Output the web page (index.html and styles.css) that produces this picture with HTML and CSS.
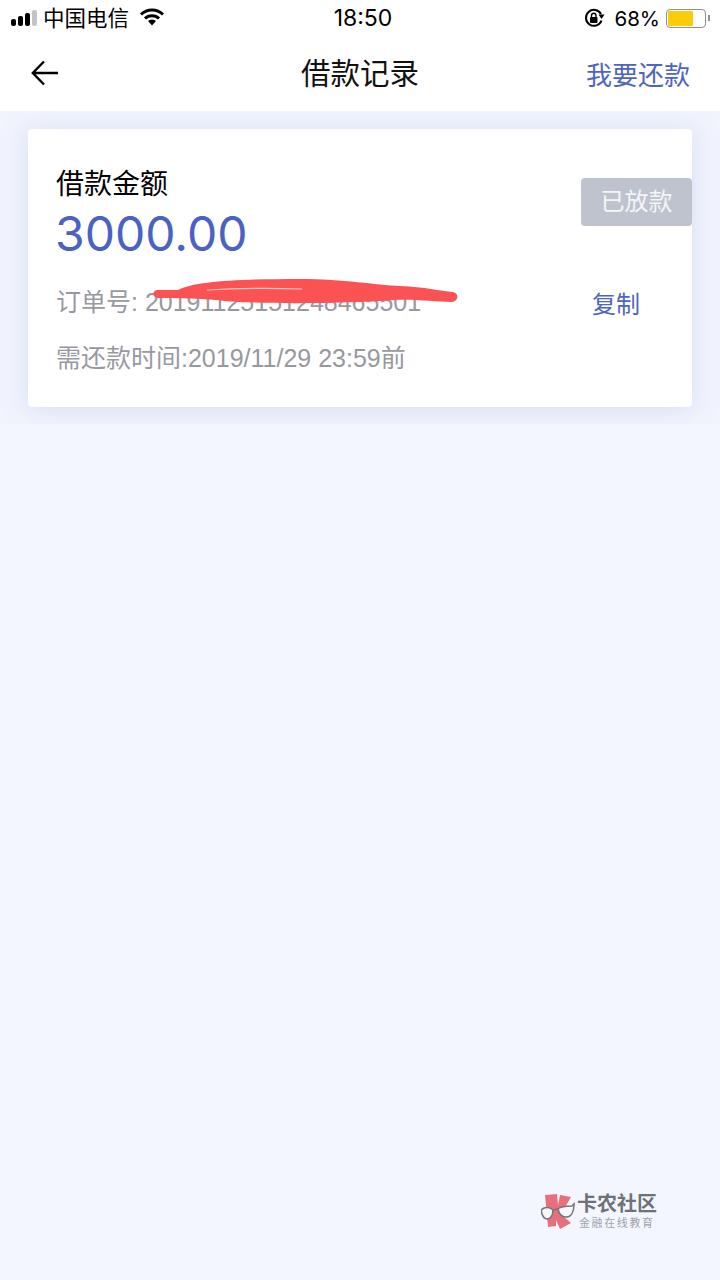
FILE: index.html
```html
<!DOCTYPE html>
<html lang="zh-CN">
<head>
    <meta charset="UTF-8">
    <meta name="viewport" content="width=device-width, initial-scale=1.0">
    <title>借款记录</title>
    <link rel="stylesheet" href="styles.css">
</head>
<body>
    <div class="status-bar">
        <div class="status-left">
            <div class="signal">
                <span class="bar b1"></span>
                <span class="bar b2"></span>
                <span class="bar b3"></span>
                <span class="bar b4"></span>
            </div>
            <span class="carrier">中国电信</span>
            <svg class="wifi" width="26" height="18" viewBox="0 0 26 18">
                <path d="M13 17.5 L9 13 A6 6 0 0 1 17 13 Z" fill="#000"/>
                <path d="M2 6.5 A16 16 0 0 1 24 6.5" fill="none" stroke="#000" stroke-width="3"/>
                <path d="M6 10.5 A10 10 0 0 1 20 10.5" fill="none" stroke="#000" stroke-width="3"/>
            </svg>
        </div>
        <span class="clock">18:50</span>
        <div class="status-right">
            <svg class="lock" width="22" height="20" viewBox="0 0 22 20">
                <path d="M17.5 12.5 A8 8 0 1 1 17 6" fill="none" stroke="#000" stroke-width="2"/>
                <path d="M14.5 6.5 L20.5 6.5 L17.5 11 Z" fill="#000"/>
                <rect x="6" y="9" width="7.5" height="6" rx="1" fill="#000"/>
                <path d="M7.5 9 V7.5 A2.2 2.2 0 0 1 12 7.5 V9" fill="none" stroke="#000" stroke-width="1.4"/>
            </svg>
            <span class="percent">68%</span>
            <div class="battery"><div class="battery-level"></div></div>
            <span class="battery-tip"></span>
        </div>
    </div>

    <div class="nav-bar">
        <svg class="back" width="28" height="26" viewBox="0 0 28 26">
            <path d="M13 1.5 L1.8 13 L13 24.5 M2 13 H27" fill="none" stroke="#000" stroke-width="2.4"/>
        </svg>
        <span class="nav-title">借款记录</span>
        <span class="nav-action">我要还款</span>
    </div>

    <div class="list">
        <div class="card">
            <div class="amount-label">借款金额</div>
            <div class="amount">3000.00</div>
            <div class="badge">已放款</div>
            <div class="order-row">
                <span class="meta">订单号: 20191125151248465501</span>
                <span class="copy">复制</span>
                <svg class="scribble" width="310" height="30" viewBox="0 0 310 30">
                    <path d="M7 14 L28 14 C45 5 90 3 150 3 C195 3 225 9 250 10 C275 11 290 15 303 16 C309 17 309 25 302 26 C285 26 265 23 245 24 C190 28 110 28 75 25 C60 23 40 22 8 22 C2 21 2 15 7 14 Z" fill="#fb5354"/>
                    <path d="M57 14 C90 12 120 12 152 13" fill="none" stroke="#fdc4c4" stroke-width="1.2"/>
                </svg>
            </div>
            <div class="meta due">需还款时间:2019/11/29 23:59前</div>
        </div>
    </div>

    <div class="watermark">
        <svg class="wm-logo" width="36" height="40" viewBox="0 0 36 40">
            <path d="M4 3 L16 2 L17 13 L19 3 L30 5 L23 17 L22 24 L30 31 L19 37 L15 28 L15 34 L7 35 L6 24 Z" fill="#e8707c"/>
            <path d="M0 18 L3 16 C6 15 10 16 12 18 C12 24 9 27 6 27 C3 27 1 24 0 18 Z" fill="#f6f7fc" stroke="#77767c" stroke-width="1.6"/>
            <path d="M17 17 C20 14 27 14 31 14 L33 12 C33 20 30 25 25 25 C21 25 18 22 17 17 Z" fill="#f6f7fc" stroke="#77767c" stroke-width="1.6"/>
            <path d="M12 18 L17 17" stroke="#77767c" stroke-width="1.6"/>
        </svg>
        <div class="wm-text">
            <div class="wm-name">卡农社区</div>
            <div class="wm-sub">金融在线教育</div>
        </div>
    </div>
</body>
</html>
```

FILE: styles.css
```css
* {
    box-sizing: border-box;
}
body {
    margin: 0;
    width: 720px;
    height: 1280px;
    overflow: hidden;
    position: relative;
    background: #f3f6fe;
    font-family: "Liberation Sans", "Noto Sans CJK SC", sans-serif;
}
.status-bar {
    height: 36px;
    padding: 0 10px 0 11px;
    background: #fff;
    display: flex;
    align-items: center;
    justify-content: space-between;
    color: #000;
}
.status-left, .status-right {
    display: flex;
    align-items: center;
}
.status-left {
    width: 275px;
}
.status-right {
    width: 270px;
    justify-content: flex-end;
}
.signal {
    display: flex;
    align-items: flex-end;
    gap: 2px;
    height: 16px;
}
.bar {
    width: 5px;
    border-radius: 2px;
    background: #000;
}
.b1 { height: 7px; }
.b2 { height: 10px; }
.b3 { height: 13px; }
.b4 { height: 16px; background: #c4c4c4; }
.carrier {
    font-size: 21.5px;
    margin-left: 6px;
    margin-bottom: 3px;
}
.wifi {
    margin-left: 10px;
    margin-bottom: 2px;
}
.clock {
    font-size: 23px;
    font-family: Inter, "Liberation Sans", sans-serif;
}
.percent {
    font-size: 20.5px;
    margin-left: 8px;
    font-family: Inter, "Liberation Sans", sans-serif;
}
.battery {
    width: 40px;
    height: 19px;
    margin-left: 6px;
    padding: 1px;
    border: 1px solid #8f8f8f;
    border-radius: 4px;
}
.battery-level {
    width: 25px;
    height: 100%;
    border-radius: 1px;
    background: #fecb0a;
}
.battery-tip {
    width: 2px;
    height: 6px;
    margin-left: 2px;
    background: #8f8f8f;
}
.nav-bar {
    height: 75px;
    padding: 0 30px 0 31px;
    background: #fff;
    display: flex;
    align-items: center;
    justify-content: space-between;
    position: relative;
}
.back {
    margin-bottom: 1px;
}
.nav-title {
    position: absolute;
    left: 0;
    right: 0;
    top: 18px;
    line-height: 40px;
    text-align: center;
    font-size: 29.5px;
    color: #111;
}
.nav-action {
    font-size: 26px;
    color: #4d65bf;
}
.list {
    height: 313px;
    padding: 18px 28px;
    background: #f1f4fd;
    overflow: hidden;
}
.card {
    position: relative;
    height: 278px;
    padding: 37px 28px 0;
    background: #fff;
    border-radius: 4px;
    box-shadow: 0 2px 24px rgba(170, 180, 220, 0.35);
}
.amount-label {
    font-size: 28px;
    line-height: 38px;
    color: #000;
}
.amount {
    font-family: Inter, "Liberation Sans", sans-serif;
    font-size: 48px;
    line-height: 52px;
    margin: 4px 0 0 -1px;
    color: #4a62c4;
}
.badge {
    position: absolute;
    top: 49px;
    right: 0;
    width: 111px;
    height: 48px;
    line-height: 47px;
    text-align: center;
    font-size: 24px;
    color: #f4f5f8;
    background: #bfc3ce;
    border-radius: 4px;
}
.order-row {
    position: relative;
    display: flex;
    justify-content: space-between;
    align-items: center;
    margin-top: 20px;
    padding-right: 24px;
    height: 40px;
}
.meta {
    font-size: 25px;
    color: #98999f;
}
.copy {
    font-size: 24px;
    margin-top: 4px;
    color: #4d65bf;
}
.scribble {
    position: absolute;
    left: 94px;
    top: -4px;
}
.due {
    margin-top: 21px;
    line-height: 34px;
}
.watermark {
    position: absolute;
    left: 541px;
    top: 1192px;
    display: flex;
}
.wm-name {
    font-size: 20px;
    line-height: 24px;
    font-weight: bold;
    color: #6f7178;
}
.wm-sub {
    font-size: 11px;
    line-height: 14px;
    letter-spacing: 1.6px;
    color: #a0a2a9;
    margin-left: 2px;
}
```
